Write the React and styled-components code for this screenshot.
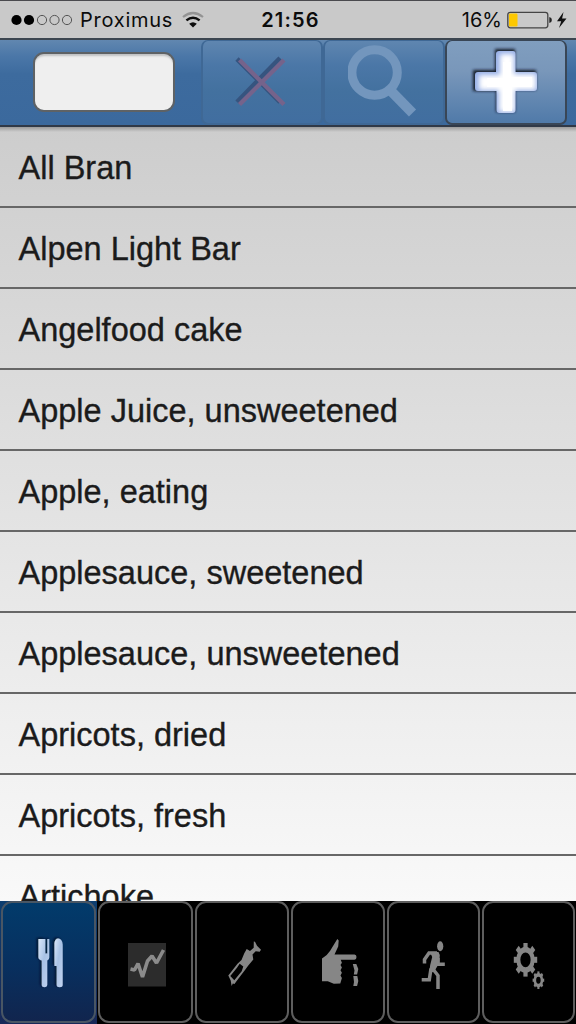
import React from 'react'
import styled, { createGlobalStyle } from 'styled-components'

const GlobalStyle = createGlobalStyle`
  * {
    box-sizing: border-box;
  }
  body {
    margin: 0;
    background: #000;
    overflow: hidden;
  }
  svg {
    display: block;
    flex: none;
  }
`
const Screen = styled.div`
  width: 576px;
  height: 1024px;
  display: flex;
  flex-direction: column;
  overflow: hidden;
  font-family: "Liberation Sans", Arial, sans-serif;
`
const StatusBar = styled.header`
  flex: none;
  height: 38px;
  display: grid;
  grid-template-columns: 1fr auto 1fr;
  align-items: center;
  padding: 1px 8px 0 11px;
  background: #c9c9c9;
  border-top: 1px solid #4a4a4e;
  font-family: Inter, sans-serif;
  font-size: 20px;
  color: #0c0c0c;
`
const StatusGroup = styled.div`
  display: flex;
  align-items: center;
  justify-content: ${({ $end }) => ($end ? 'flex-end' : 'flex-start')};
`
const Carrier = styled.span`
  margin: 0 9px 0 7px;
  letter-spacing: 0.75px;
`
const Clock = styled.span`
  padding-left: 2px;
  font-weight: 600;
  letter-spacing: 1.2px;
`
const Percent = styled.span`
  margin-right: 5px;
  letter-spacing: 0;
`
const Toolbar = styled.div`
  flex: none;
  height: 89px;
  display: flex;
  padding-right: 9px;
  border-top: 2px solid #3c4650;
  border-bottom: 2px solid #303947;
  background: linear-gradient(#6187b0 0, #4b77a8 16px, #3d6b9e 34px, #3b699d 100%);
`
const SearchBox = styled.div`
  width: 201px;
  padding: 12px 0 0 33px;
`
const SearchInput = styled.input`
  display: block;
  width: 142px;
  height: 60px;
  padding: 0 12px;
  border: 2px solid #5e6265;
  border-radius: 11px;
  outline: none;
  background: #efefef;
  box-shadow: inset 0 3px 2px -1px #bfc1c3;
  font-size: 28px;
`
const ToolButton = styled.button`
  width: 122px;
  height: 85px;
  padding: 0;
  display: flex;
  align-items: center;
  justify-content: center;
  border: 2px solid ${({ $active }) => ($active ? '#394656' : '#3f6895')};
  border-top-width: 1px;
  border-radius: 7px;
  background: ${({ $active }) =>
    $active
      ? 'linear-gradient(#809ebf 0, #7997ba 30px, #507aa9 100%)'
      : 'linear-gradient(#5f86b0 0, #4b77a7 24px, #43719f 50px, #416ea0 100%)'};
`
const FoodList = styled.ul`
  flex: 1;
  min-height: 0;
  margin: 0;
  padding: 0;
  overflow: hidden;
  list-style: none;
  background:
    linear-gradient(#9b9b9b, rgba(155, 155, 155, 0) 5px),
    linear-gradient(#cdcdcd, #f9f9f9);
`
const FoodItem = styled.li`
  height: 81px;
  padding-left: 18.5px;
  border-bottom: 2px solid #676767;
  line-height: 82px;
  font-size: 32.5px;
  white-space: nowrap;
  color: #1b1b1b;
  -webkit-text-stroke: 0.35px #1b1b1b;
`
const TabBar = styled.nav`
  flex: none;
  height: 123px;
  display: grid;
  grid-template-columns: 97px 97px 96px 96px 95px 95px;
  background: #000;
`
const TabCell = styled.div`
  padding: 0 1px 1px;
  background: ${({ $active }) => ($active ? 'linear-gradient(#0d3e70, #172858)' : '#000')};
`
const Tab = styled.button`
  width: 100%;
  height: 100%;
  padding: 0;
  display: flex;
  align-items: center;
  justify-content: center;
  border: 2px solid ${({ $active }) => ($active ? '#495664' : '#5e5e5e')};
  border-radius: 11px;
  background: ${({ $active }) => ($active ? 'linear-gradient(#023b6b, #082f5e 55%, #11254e)' : '#000')};
`

const WifiIcon = () => (
  <svg width="22" height="18" viewBox="0 0 22 18" fill="none">
    <path d="M1 6 Q11 -2 21 6" stroke="#939393" strokeWidth="2.2" />
    <path d="M4.4 9.4 Q11 4 17.6 9.4" stroke="#0c0c0c" strokeWidth="2.5" />
    <path d="M7.2 12.8 Q11 9.5 14.8 12.8 L11 16.5Z" fill="#0c0c0c" />
  </svg>
)

const SignalDots = () => (
  <svg width="62" height="12" viewBox="0 0 62 12">
    {[5.5, 18, 31, 43.5, 56].map((cx, i) => (
      <circle key={cx} cx={cx} cy="6" r={i < 2 ? 5.1 : 4.6} fill={i < 2 ? '#000' : 'none'} stroke={i < 2 ? 'none' : '#555'} />
    ))}
  </svg>
)

const BatteryIcon = () => (
  <svg width="61" height="20" viewBox="0 0 61 20">
    <rect x="0.8" y="2.3" width="40" height="15.5" rx="2.5" fill="none" stroke="#444" strokeWidth="1.3" />
    <rect x="2" y="3.5" width="8.5" height="13" rx="1.2" fill="#fdc800" />
    <path d="M42.3 7 q2.6 .5 2.6 3 t-2.6 3z" fill="#222" />
    <path d="M56.5 2 L50 11.2 h4.2 L52 18 L59.5 8.6 h-4.4z" fill="#111" />
  </svg>
)

const CrossIcon = () => (
  <svg width="56" height="54" viewBox="0 0 56 54" fill="none">
    <path d="M3 4 L46 47 M46 3 L3 47" stroke="#36547f" strokeWidth="4.6" />
    <path d="M5.5 5 L50 49.5 M50 5 L5.5 49.5" stroke="#75638b" strokeWidth="4.4" />
  </svg>
)

const SearchIcon = () => (
  <svg width="72" height="76" viewBox="0 0 72 76" fill="none" stroke="#7396bd">
    <circle cx="26.6" cy="28.5" r="22.7" strokeWidth="9" />
    <path d="M41.5 45.5 L64.5 69" strokeWidth="10" />
  </svg>
)

const PlusIcon = () => (
  <svg width="72" height="72" viewBox="0 0 72 72">
    <defs>
      <filter id="plusShadow" x="-20%" y="-20%" width="140%" height="140%">
        <feGaussianBlur stdDeviation="1.5" />
      </filter>
      <filter id="plusGlow">
        <feGaussianBlur stdDeviation="2.6" />
      </filter>
      <clipPath id="plusClip">
        <path d="M29 5h14q2.5 0 2.5 3v18H64q3 0 3 3v13q0 3-3 3H45.500v19q0 3-3 3H29.500q-3 0-3-3V45H8q-3 0-3-3V29q0-3 3-3h18V8q0-3 3-3z" />
      </clipPath>
    </defs>
    <path d="M25 3h20v21h21v20H45v22H26V45H3V24h22z" fill="#141d2b" filter="url(#plusShadow)" />
    <g clipPath="url(#plusClip)">
      <path d="M0 0h72v72H0z" fill="#96afe6" />
      <path d="M32 10h10v20h22v12H43v22H31V42H11V31h21z" fill="#fff" stroke="#fff" strokeWidth="4" filter="url(#plusGlow)" />
      <path d="M33 16h8v15h21v10H42v24h-9V41H17v-9h16z" fill="#fff" />
    </g>
  </svg>
)

// Tab icons share one 60x60 canvas
const TabSvg = ({ children }) => (
  <svg width="60" height="60" viewBox="0 0 60 60" fill="#868686">
    {children}
  </svg>
)

const FoodIcon = () => (
  <TabSvg>
    <defs>
      <linearGradient id="silver" x1="0" y1="0" x2="1" y2="1">
        <stop offset="0" stopColor="#d9e7fa" />
        <stop offset=".45" stopColor="#a8c2e5" />
        <stop offset="1" stopColor="#c2d4f1" />
      </linearGradient>
      <filter id="silverShadow" x="-40%" y="-20%" width="180%" height="140%">
        <feDropShadow dx="-1.5" dy="-1" stdDeviation="1" floodColor="#001024" floodOpacity=".9" />
      </filter>
    </defs>
    <g fill="url(#silver)" filter="url(#silverShadow)">
      <path d="M19.500 7h6.800v14.500h2V7h2v18.500q0 2-2 3V53q0 2-2.500 2.200-3 0-3-2.200V28.500q-3.300-1-3.300-3z" />
      <path d="M35.500 11q.6-4.500 3.800-4.500 4 .5 4.400 6V53q0 2.200-3 2.200t-3-2.200V34h-2.200z" />
    </g>
  </TabSvg>
)

const ChartIcon = () => (
  <TabSvg>
    <path d="M12 11h38v43.500H12z" fill="#2c2c2c" />
    <path d="M14.500 37l4 1 3.500-6.500 4.500 13.500 5-16 4.500-5 4.500 7 7-13" fill="none" stroke="#8b8b8b" strokeWidth="3.6" strokeLinejoin="bevel" />
  </TabSvg>
)

const SyringeIcon = () => (
  <TabSvg>
    <path
      fillRule="evenodd"
      d="M41.800 9.500L43 9.700 45 13.800 49 17.800 47.700 19.800 43.700 19.200 40.500 22.500 41.300 27.500 36.300 33.500 33 38 25 48.500 22.500 52 20.800 51.500 19.600 54 18.700 48.500 16.300 43.500 25.500 31.800 29.500 28 32.300 21.200 34.700 17 38 19 41.700 15.800zM27.700 31.800L25 35.800 18.300 44 22.300 48.200 29.700 39.200 31.300 34.500z"
    />
  </TabSvg>
)

const FingerIcon = () => (
  <TabSvg>
    <path d="M14 26.500L18.700 23 22 19 29.300 7l1.400 1.500-.5 6L26.500 22.500H46.500q2 0 2 2.600t-2 2.600H32.700l1.200 3-1.400 2.300 1.400 2.600-1.400 2.600 1.400 2.600-1.400 2.600 1.400 2.600-1.600 5.400-6.500.4-6-2.500H14z" />
    <path d="M44.800 32h3.500l2 5-1.200 5.500h-3.300l.7-4zM45.300 44h4l1 5-1.200 5h-3.800l.7-4z" />
  </TabSvg>
)

const RunnerIcon = () => (
  <TabSvg>
    <ellipse cx="36.200" cy="14.200" rx="3.100" ry="5" />
    <path d="M20.500 31.500V27.500L25 21H33M34 26V32.300H40.800M27 36.500L25.300 47.700H17.700M28.500 36.500L34 43.500V57" fill="none" stroke="#868686" strokeWidth="3.500" />
    <path d="M26 20h8.500l1.300 3-.5 8-4.800 8-5.500 3 1.200-9 2-8z" />
  </TabSvg>
)

const Gear = ({ cx, cy, rx, ry, hub }) => (
  <g transform={`translate(${cx} ${cy}) scale(${rx} ${ry})`}>
    {Array.from({ length: 8 }, (_, i) => (
      <rect key={i} x="-.18" y="-1" width=".36" height=".5" transform={`rotate(${i * 45})`} />
    ))}
    <circle r=".61" fill="none" stroke="#868686" strokeWidth={hub} />
  </g>
)

const GearsIcon = () => (
  <TabSvg>
    <Gear cx={26.5} cy={27.8} rx={11.7} ry={16.8} hub={0.34} />
    <Gear cx={39.4} cy={48.2} rx={5.8} ry={8.8} hub={0.44} />
  </TabSvg>
)

const foods = [
  'All Bran',
  'Alpen Light Bar',
  'Angelfood cake',
  'Apple Juice, unsweetened',
  'Apple, eating',
  'Applesauce, sweetened',
  'Applesauce, unsweetened',
  'Apricots, dried',
  'Apricots, fresh',
  'Artichoke',
]

const tabs = [
  { name: 'Food', Icon: FoodIcon },
  { name: 'Chart', Icon: ChartIcon },
  { name: 'Insulin', Icon: SyringeIcon },
  { name: 'Glucose', Icon: FingerIcon },
  { name: 'Activity', Icon: RunnerIcon },
  { name: 'Settings', Icon: GearsIcon },
]

function App() {
  return (
    <>
      <GlobalStyle />
      <Screen>
        <StatusBar>
          <StatusGroup>
            <SignalDots />
            <Carrier>Proximus</Carrier>
            <WifiIcon />
          </StatusGroup>
          <Clock>21:56</Clock>
          <StatusGroup $end>
            <Percent>16%</Percent>
            <BatteryIcon />
          </StatusGroup>
        </StatusBar>
        <Toolbar>
          <SearchBox>
            <SearchInput aria-label="Search" />
          </SearchBox>
          <ToolButton aria-label="Clear"><CrossIcon /></ToolButton>
          <ToolButton aria-label="Find"><SearchIcon /></ToolButton>
          <ToolButton $active aria-label="Add"><PlusIcon /></ToolButton>
        </Toolbar>
        <FoodList>
          {foods.map((food) => (
            <FoodItem key={food}>{food}</FoodItem>
          ))}
        </FoodList>
        <TabBar>
          {tabs.map(({ name, Icon }, i) => (
            <TabCell key={name} $active={i === 0}>
              <Tab aria-label={name} $active={i === 0}><Icon /></Tab>
            </TabCell>
          ))}
        </TabBar>
      </Screen>
    </>
  )
}

export default App
